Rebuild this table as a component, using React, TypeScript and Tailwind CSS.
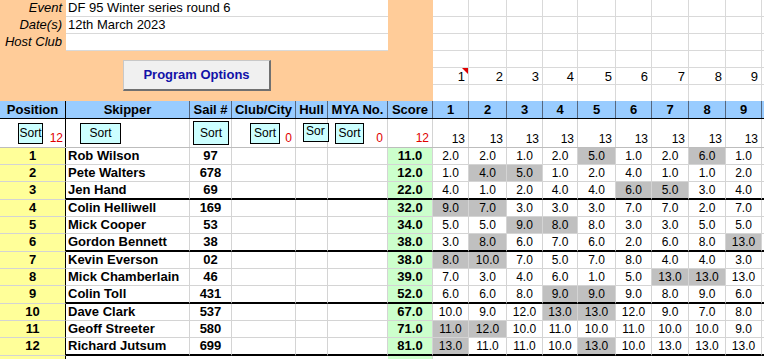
const FONT = "font-['Liberation_Sans',Arial,sans-serif]";

const COLS = ["w-[66px]", "w-[124px]", "w-[42px]", "w-[64px]", "w-[32px]", "w-[60px]", "w-[45px]"];
const RACE = ["w-[36px]", "w-[38px]", "w-[36px]", "w-[35px]", "w-[38px]", "w-[36px]", "w-[37px]", "w-[37px]", "w-[36px]"];
const HEADS = ["Position", "Skipper", "Sail #", "Club/City", "Hull", "MYA No.", "Score"];

type Row = { pos: number; name: string; sail: string; score: string; races: string[]; low: number[] };

const rows: Row[] = [
  { pos: 1, name: "Rob Wilson", sail: "97", score: "11.0", races: ["2.0", "2.0", "1.0", "2.0", "5.0", "1.0", "2.0", "6.0", "1.0"], low: [4, 7] },
  { pos: 2, name: "Pete Walters", sail: "678", score: "12.0", races: ["1.0", "4.0", "5.0", "1.0", "2.0", "4.0", "1.0", "1.0", "2.0"], low: [1, 2] },
  { pos: 3, name: "Jen Hand", sail: "69", score: "22.0", races: ["4.0", "1.0", "2.0", "4.0", "4.0", "6.0", "5.0", "3.0", "4.0"], low: [5, 6] },
  { pos: 4, name: "Colin Helliwell", sail: "169", score: "32.0", races: ["9.0", "7.0", "3.0", "3.0", "3.0", "7.0", "7.0", "2.0", "7.0"], low: [0, 1] },
  { pos: 5, name: "Mick Cooper", sail: "53", score: "34.0", races: ["5.0", "5.0", "9.0", "8.0", "8.0", "3.0", "3.0", "5.0", "5.0"], low: [2, 3] },
  { pos: 6, name: "Gordon Bennett", sail: "38", score: "38.0", races: ["3.0", "8.0", "6.0", "7.0", "6.0", "2.0", "6.0", "8.0", "13.0"], low: [1, 8] },
  { pos: 7, name: "Kevin Everson", sail: "02", score: "38.0", races: ["8.0", "10.0", "7.0", "5.0", "7.0", "8.0", "4.0", "4.0", "3.0"], low: [0, 1] },
  { pos: 8, name: "Mick Chamberlain", sail: "46", score: "39.0", races: ["7.0", "3.0", "4.0", "6.0", "1.0", "5.0", "13.0", "13.0", "13.0"], low: [6, 7] },
  { pos: 9, name: "Colin Toll", sail: "431", score: "52.0", races: ["6.0", "6.0", "8.0", "9.0", "9.0", "9.0", "8.0", "9.0", "6.0"], low: [3, 4] },
  { pos: 10, name: "Dave Clark", sail: "537", score: "67.0", races: ["10.0", "9.0", "12.0", "13.0", "13.0", "12.0", "9.0", "7.0", "8.0"], low: [3, 4] },
  { pos: 11, name: "Geoff Streeter", sail: "580", score: "71.0", races: ["11.0", "12.0", "10.0", "11.0", "10.0", "11.0", "10.0", "10.0", "9.0"], low: [0, 1] },
  { pos: 12, name: "Richard Jutsum", sail: "699", score: "81.0", races: ["13.0", "11.0", "11.0", "10.0", "13.0", "10.0", "13.0", "13.0", "13.0"], low: [0, 4] },
];

export default function App() {
  return (
    <div className={`${FONT} w-[764px] h-[359px] overflow-hidden bg-white text-black`}>
      <TopArea />
      <HeaderRow />
      <SortRow />
      {rows.map((r, i) => (
        <DataRow key={r.pos} row={r} thick={i % 3 === 2} />
      ))}
      <div className="flex h-[17px]">
        <div className={`${COLS[0]} bg-[#ffff99] border-r border-black`} />
        <div className="w-[322px]" />
        <div className={`${COLS[6]} bg-[#ccffcc] border-r border-[#d4d4d4]`} />
      </div>
    </div>
  );
}

function TopArea() {
  const info = [
    ["Event", "DF 95 Winter series round 6"],
    ["Date(s)", "12th March 2023"],
    ["Host Club", ""],
  ];
  return (
    <div className="flex h-[101px]">
      <div className="w-[433px] bg-[#ffcc99] flex flex-col">
        {info.map(([label, value]) => (
          <div key={label} className="flex h-[17px] text-[13px] leading-[16px]">
            <div className="w-[66px] pr-[4px] text-right italic">{label}</div>
            <div className="w-[322px] bg-white border-b border-[#d9d9d9] pl-[2px]">{value}</div>
          </div>
        ))}
        <button className="mt-[9px] ml-[123px] w-[148px] h-[31px] bg-[#f0f0f0] border border-[#c8c8c8] border-r-2 border-b-2 border-r-[#707070] border-b-[#707070] text-[13px] font-bold text-[#1212a8]">
          Program Options
        </button>
      </div>
      <div className="flex-1 flex flex-col">
        {[0, 1, 2, 3, 4, 5].map((r) => (
          <div key={r} className={`flex ${r === 5 ? "h-[16px]" : "h-[17px] border-b border-[#d9d9d9]"}`}>
            {RACE.map((w, c) => (
              <div key={c} className={`${w} relative border-r border-[#d9d9d9] text-right pr-[3px] text-[13px] leading-[17px]`}>
                {r === 4 ? c + 1 : ""}
                {r === 4 && c === 0 && (
                  <span className="absolute top-0 right-0 w-0 h-0 border-t-[6px] border-t-[#e00000] border-l-[6px] border-l-transparent" />
                )}
              </div>
            ))}
          </div>
        ))}
      </div>
    </div>
  );
}

function HeaderRow() {
  return (
    <div className="flex h-[18px] bg-[#99ccff] border-b border-black text-[13px] font-bold leading-[17px]">
      {HEADS.map((h, i) => (
        <div key={h} className={`${COLS[i]} text-center whitespace-nowrap overflow-hidden border-r ${i === 0 ? "border-black" : "border-[#55677f]"}`}>
          {h}
        </div>
      ))}
      {RACE.map((w, i) => (
        <div key={i} className={`${w} text-center border-r border-[#55677f]`}>
          {i + 1}
        </div>
      ))}
    </div>
  );
}

function SortBtn({ className }: { className: string }) {
  return (
    <div className={`${className} shrink-0 bg-[#ccffff] border border-black flex items-center justify-center text-[12px] leading-none`}>
      Sort
    </div>
  );
}

function Count({ n }: { n: string }) {
  return <span className="ml-auto self-end pb-[3px] text-[12px] leading-[12px] text-[#e00000]">{n}</span>;
}

function SortRow() {
  return (
    <div className="flex h-[29px] border-b border-[#bdbdbd]">
      <div className={`${COLS[0]} flex items-center pl-[18px] pr-[2px] border-r border-black`}>
        <SortBtn className="w-[25px] h-[21px]" />
        <Count n="12" />
      </div>
      <div className={`${COLS[1]} flex items-center pl-[14px] border-r border-[#d4d4d4]`}>
        <SortBtn className="w-[41px] h-[21px]" />
      </div>
      <div className={`${COLS[2]} flex items-center pl-[3px] border-r border-[#d4d4d4]`}>
        <SortBtn className="w-[36px] h-[24px]" />
      </div>
      <div className={`${COLS[3]} flex items-center pl-[18px] pr-[3px] border-r border-[#d4d4d4]`}>
        <SortBtn className="w-[30px] h-[21px]" />
        <Count n="0" />
      </div>
      <div className={`${COLS[4]} relative flex items-center pr-[3px] border-r border-[#d4d4d4]`}>
        <Count n="0" />
        <div className="absolute left-[7px] top-[4px] w-[26px] h-[19px] bg-[#ccffff] border border-black text-[12px] leading-[14px] pl-[2px] overflow-hidden">
          Sor
        </div>
      </div>
      <div className={`${COLS[5]} flex items-center pl-[7px] pr-[4px] border-r border-[#d4d4d4]`}>
        <SortBtn className="w-[29px] h-[21px]" />
        <Count n="0" />
      </div>
      <div className={`${COLS[6]} flex items-center pr-[3px] border-r border-[#d4d4d4]`}>
        <Count n="12" />
      </div>
      {RACE.map((w, i) => (
        <div key={i} className={`${w} flex pr-[3px] border-r border-[#d4d4d4]`}>
          <span className="ml-auto self-end pb-[1px] text-[12px] leading-[13px]">13</span>
        </div>
      ))}
    </div>
  );
}

function DataRow({ row, thick }: { row: Row; thick: boolean }) {
  const b = thick ? "h-[18px] border-b-2 border-b-black" : "h-[17px] border-b border-b-[#d4d4d4]";
  const cell = `${b} border-r border-r-[#d4d4d4]`;
  return (
    <div className="flex leading-[16px]">
      <div className={`${COLS[0]} ${thick ? "h-[18px]" : "h-[17px]"} border-b border-b-[#d4d4d4] bg-[#ffff99] border-r border-r-black text-center text-[13px] font-bold`}>
        {row.pos}
      </div>
      <div className={`${COLS[1]} ${cell} pl-[2px] text-[13px] font-bold whitespace-nowrap`}>{row.name}</div>
      <div className={`${COLS[2]} ${cell} text-center text-[13px] font-bold`}>{row.sail}</div>
      <div className={`${COLS[3]} ${cell}`} />
      <div className={`${COLS[4]} ${cell}`} />
      <div className={`${COLS[5]} ${cell}`} />
      <div className={`${COLS[6]} ${cell} bg-[#ccffcc] text-center text-[13px] font-bold`}>{row.score}</div>
      {row.races.map((v, i) => (
        <div key={i} className={`${RACE[i]} ${cell} text-center text-[12px] ${row.low.includes(i) ? "bg-[#c0c0c0]" : ""}`}>
          {v}
        </div>
      ))}
      <div className={`flex-1 ${b}`} />
    </div>
  );
}
